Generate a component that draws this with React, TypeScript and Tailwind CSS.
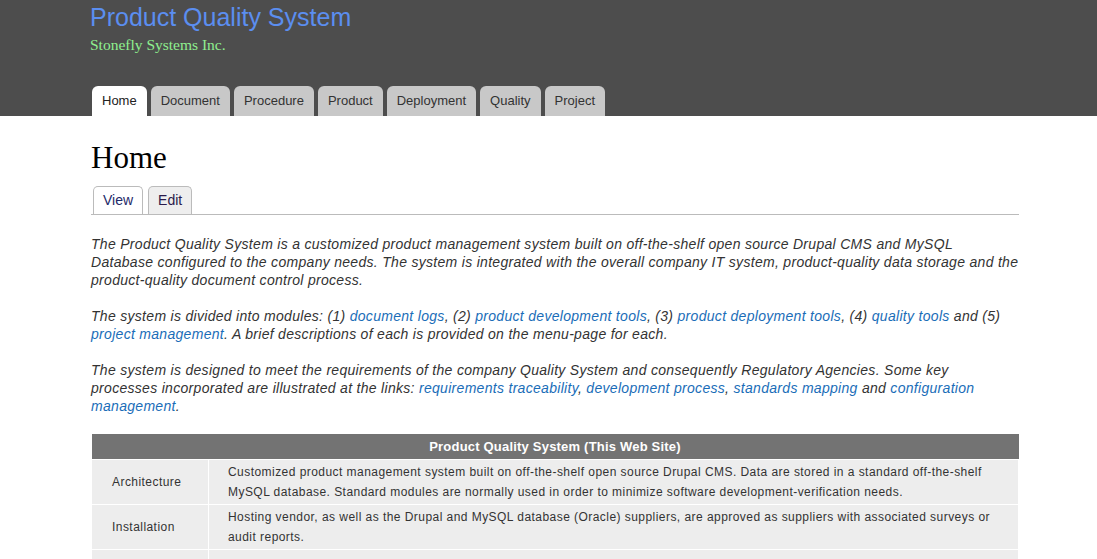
const navTabs = ["Home", "Document", "Procedure", "Product", "Deployment", "Quality", "Project"]

function A({ children }: { children: React.ReactNode }) {
  return <a className="text-[#1a6db8] no-underline">{children}</a>
}

const rows = [
  {
    label: "Architecture",
    text: "Customized product management system built on off-the-shelf open source Drupal CMS. Data are stored in a standard off-the-shelf MySQL database. Standard modules are normally used in order to minimize software development-verification needs.",
  },
  {
    label: "Installation",
    text: "Hosting vendor, as well as the Drupal and MySQL database (Oracle) suppliers, are approved as suppliers with associated surveys or audit reports.",
  },
  {
    label: "Installation",
    text: "Installation qualification is performed for each release of the system, with records kept in the document control system.",
  },
]

export default function App() {
  return (
    <div className="min-h-screen bg-white font-['Liberation_Sans',Arial,sans-serif] text-[#333]">
      {/* Header */}
      <div className="bg-[#4d4d4d] h-[116px] pl-[90px] flex flex-col">
        <h1 className="text-[#5b8ef0] text-[25px] leading-[32px] pt-[1px]">Product Quality System</h1>
        <div className="text-[#8ff08f] font-['Liberation_Serif',serif] text-[15.5px] leading-[18px] mt-[3px]">
          Stonefly Systems Inc.
        </div>
        <div className="flex gap-[4px] mt-auto pl-[2px]">
          {navTabs.map((t, i) => (
            <div
              key={t}
              className={
                i === 0
                  ? "h-[30px] px-[10px] flex items-center rounded-t-[6px] bg-white text-[13px] text-[#222]"
                  : "h-[30px] px-[10px] flex items-center rounded-t-[6px] bg-[#c8c8c8] text-[13px] text-[#333]"
              }
            >
              {t}
            </div>
          ))}
        </div>
      </div>

      {/* Content */}
      <div className="pl-[91px] w-[1019px]">
        <h2 className="font-['Liberation_Serif',serif] text-[31px] leading-[36px] text-black pt-[24px]">Home</h2>
        <div className="flex gap-[5px] mt-[10px] border-b border-[#bbb] pl-[2px]">
          <div className="h-[28px] px-[9px] flex items-center border border-b-0 border-[#bbb] rounded-t-[5px] bg-white text-[14px] text-[#1e2a6a] -mb-px pb-px">
            View
          </div>
          <div className="h-[28px] px-[9px] flex items-center border border-b-0 border-[#bbb] rounded-t-[5px] bg-[#eee] text-[14px] text-[#2a1a4a]">
            Edit
          </div>
        </div>

        <div className="italic text-[14px] leading-[18px] tracking-[0.3px] text-[#333] pt-[20px]">
          <p>
            The Product Quality System is a customized product management system built on off-the-shelf open source Drupal CMS and MySQL
            Database configured to the company needs. The system is integrated with the overall company IT system, product-quality data storage and the
            product-quality document control process.
          </p>
          <p className="mt-[18px]">
            The system is divided into modules: (1) <A>document logs</A>, (2) <A>product development tools</A>, (3){" "}
            <A>product deployment tools</A>, (4) <A>quality tools</A> and (5) <A>project management</A>. A brief descriptions of
            each is provided on the menu-page for each.
          </p>
          <p className="mt-[18px]">
            The system is designed to meet the requirements of the company Quality System and consequently Regulatory Agencies. Some key
            processes incorporated are illustrated at the links: <A>requirements traceability</A>, <A>development process</A>,{" "}
            <A>standards mapping</A> and <A>configuration management</A>.
          </p>
        </div>

        <table className="w-full mt-[19px] border-collapse text-[12px] tracking-[0.45px]">
          <thead>
            <tr>
              <th colSpan={2} className="bg-[#737373] text-white font-bold text-[13px] tracking-[0.2px] h-[25px] text-center">
                Product Quality System (This Web Site)
              </th>
            </tr>
          </thead>
          <tbody>
            {rows.map((r, i) => (
              <tr key={i} className="bg-[#ededed]">
                <td className="w-[117px] h-[45px] border border-white pl-[20px] pr-[8px] align-middle text-[12px] leading-[20px]">
                  {r.label}
                </td>
                <td className="border border-white pl-[19px] pr-[20px] py-[2px] text-[12px] leading-[20px]">{r.text}</td>
              </tr>
            ))}
          </tbody>
        </table>
      </div>
    </div>
  )
}
